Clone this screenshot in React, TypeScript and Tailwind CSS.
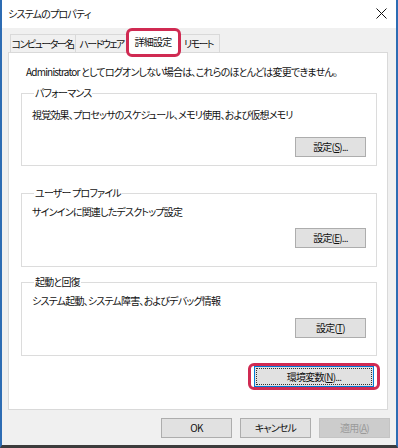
import React from 'react';

const font = "font-['Noto_Sans_CJK_JP','Noto_Sans',sans-serif] [font-feature-settings:'palt'] text-[10px] leading-[16px] tracking-[-0.8px] text-[#111] whitespace-nowrap";

function WinButton({ children, disabled, className = '' }: { children: React.ReactNode; disabled?: boolean; className?: string }) {
  return (
    <div
      className={`flex h-[20px] w-[71px] items-center justify-center border ${
        disabled ? 'border-[#c4c4c4] bg-[#cccccc] text-[#9a9a9a]' : 'border-[#adadad] bg-[#e1e1e1]'
      } ${className}`}
    >
      {children}
    </div>
  );
}

function Highlight({ className }: { className: string }) {
  return <div className={`pointer-events-none absolute rounded-[6px] border-[3px] border-[#d02a52] ${className}`} />;
}

function Group({ title, desc, button, heightCls, legendGap, btnGap }: { title: string; desc: string; button: React.ReactNode; heightCls: string; legendGap: string; btnGap: string }) {
  return (
    <fieldset className={`ml-[12px] mr-[10px] border border-[#dcdcdc] px-[10px] ${heightCls}`}>
      <legend className="ml-[2px] px-[1px]">{title}</legend>
      <div className={legendGap}>{desc}</div>
      <div className={`flex justify-end ${btnGap}`}>
        <WinButton>{button}</WinButton>
      </div>
    </fieldset>
  );
}

export default function App() {
  return (
    <div className={`${font} flex h-[448px] w-[398px] flex-col border-x-2 border-b-[3px] border-x-[#2d6cb3] border-b-[#3c3c3c] bg-[#f0f0f0]`}>
      {/* title bar */}
      <div className="flex h-[28px] items-center justify-between bg-white pl-[6px] pr-[9px]">
        <span>システムのプロパティ</span>
        <svg width="11" height="11" viewBox="0 0 11 11" className="mt-[-2px]">
          <path d="M0.5 0.5 L10.5 10.5 M10.5 0.5 L0.5 10.5" stroke="#111" strokeWidth="1" />
        </svg>
      </div>

      {/* tabs */}
      <div className="relative z-10 -mb-px mt-[2px] flex h-[23px] items-end pl-[8px] tracking-[-1.6px]">
        <div className="flex h-[19px] w-[66px] items-center justify-center overflow-hidden border border-b-0 border-[#d9d9d9] pr-[1px]">コンピューター名</div>
        <div className="flex h-[19px] w-[52px] items-center justify-center overflow-hidden border border-b-0 border-l-0 border-[#d9d9d9]">ハードウェア</div>
        <div className="relative -ml-px flex h-[23px] w-[52px] items-center justify-center border border-b-0 border-[#d9d9d9] bg-white tracking-[-0.8px]">
          詳細設定
          <Highlight className="-left-[2px] -right-[3px] -top-[3px] -bottom-[4px]" />
        </div>
        <div className="-ml-px flex h-[19px] w-[42px] items-center justify-center border border-b-0 border-l-0 border-[#d9d9d9]">リモート</div>
      </div>

      {/* panel */}
      <div className="ml-[6px] mr-[8px] flex h-[358px] flex-col border border-[#d9d9d9] bg-white">
        <div className="ml-[17px] mt-[11px]">Administrator としてログオンしない場合は、これらのほとんどは変更できません。</div>

        <div className="mt-[5px]">
          <Group
            title="パフォーマンス"
            desc="視覚効果、プロセッサのスケジュール、メモリ使用、および仮想メモリ"
            button={<span>設定(<u>S</u>)...</span>}
            heightCls="h-[81px]"
            legendGap="mt-[6px]"
            btnGap="mt-[14px]"
          />
        </div>
        <div className="mt-[19px]">
          <Group
            title="ユーザー プロファイル"
            desc="サインインに関連したデスクトップ設定"
            button={<span>設定(<u>E</u>)...</span>}
            heightCls="h-[82px]"
            legendGap="mt-[3px]"
            btnGap="mt-[8px]"
          />
        </div>
        <div className="mt-[7px]">
          <Group
            title="起動と回復"
            desc="システム起動、システム障害、およびデバッグ情報"
            button={<span>設定(<u>T</u>)</span>}
            heightCls="h-[82px]"
            legendGap="mt-[3px]"
            btnGap="mt-[9px]"
          />
        </div>

        <div className="mr-[13px] mt-[10px] flex justify-end">
          <div className="relative flex h-[21px] w-[120px] items-center justify-center border border-[#0078d7] bg-[#e1e1e1]">
            <div className="flex h-[17px] w-[116px] items-center justify-center border border-dotted border-[#333]">
              環境変数(<u>N</u>)...
            </div>
            <Highlight className="-left-[7px] -right-[7px] -top-[4px] -bottom-[4px]" />
          </div>
        </div>
      </div>

      {/* bottom buttons */}
      <div className="mr-[6px] mt-[8px] flex justify-end gap-[8px]">
        <WinButton>OK</WinButton>
        <WinButton>キャンセル</WinButton>
        <WinButton disabled>
          <span>適用(<u>A</u>)</span>
        </WinButton>
      </div>
    </div>
  );
}
